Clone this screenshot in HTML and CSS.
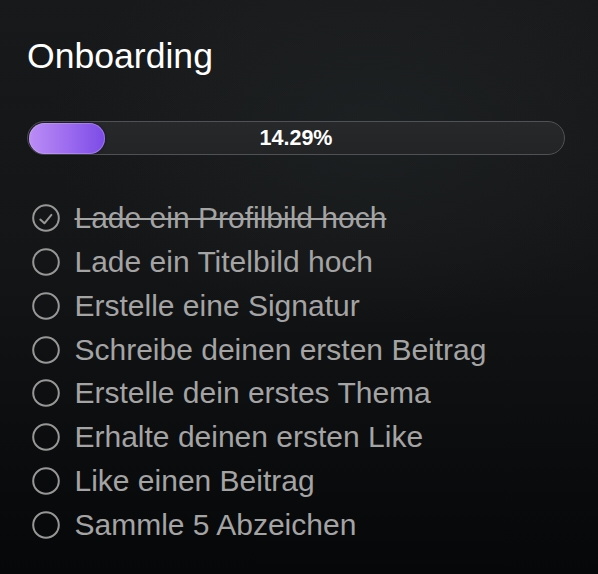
FILE: index.html
```html
<!DOCTYPE html>
<html lang="de">
<head>
<meta charset="utf-8">
<title>Onboarding</title>
<link rel="stylesheet" href="styles.css">
</head>
<body>
<main class="panel">
  <h1 class="title">Onboarding</h1>
  <div class="progress">
    <div class="progress-track">
      <div class="progress-fill" style="width: 14.29%"></div>
    </div>
    <span class="progress-label">14.29%</span>
  </div>
  <ul class="tasks">
    <li class="task done">
      <svg class="icon" viewBox="0 0 28 28" aria-hidden="true"><circle cx="14" cy="14" r="12.8"/><path d="M8.3 15.6 L12.4 19.3 L19.4 10.9"/></svg>
      <span class="task-text">Lade ein Profilbild hoch</span>
    </li>
    <li class="task">
      <svg class="icon" viewBox="0 0 28 28" aria-hidden="true"><circle cx="14" cy="14" r="12.8"/></svg>
      <span class="task-text">Lade ein Titelbild hoch</span>
    </li>
    <li class="task">
      <svg class="icon" viewBox="0 0 28 28" aria-hidden="true"><circle cx="14" cy="14" r="12.8"/></svg>
      <span class="task-text">Erstelle eine Signatur</span>
    </li>
    <li class="task">
      <svg class="icon" viewBox="0 0 28 28" aria-hidden="true"><circle cx="14" cy="14" r="12.8"/></svg>
      <span class="task-text">Schreibe deinen ersten Beitrag</span>
    </li>
    <li class="task">
      <svg class="icon" viewBox="0 0 28 28" aria-hidden="true"><circle cx="14" cy="14" r="12.8"/></svg>
      <span class="task-text">Erstelle dein erstes Thema</span>
    </li>
    <li class="task">
      <svg class="icon" viewBox="0 0 28 28" aria-hidden="true"><circle cx="14" cy="14" r="12.8"/></svg>
      <span class="task-text">Erhalte deinen ersten Like</span>
    </li>
    <li class="task">
      <svg class="icon" viewBox="0 0 28 28" aria-hidden="true"><circle cx="14" cy="14" r="12.8"/></svg>
      <span class="task-text">Like einen Beitrag</span>
    </li>
    <li class="task">
      <svg class="icon" viewBox="0 0 28 28" aria-hidden="true"><circle cx="14" cy="14" r="12.8"/></svg>
      <span class="task-text">Sammle 5 Abzeichen</span>
    </li>
  </ul>
</main>
</body>
</html>
```

FILE: styles.css
```css
html, body {
  margin: 0;
  padding: 0;
  height: 100%;
}

body {
  font-family: "Liberation Sans", Arial, Helvetica, sans-serif;
  background:
    radial-gradient(ellipse 320px 200px at 62% 22%, rgba(42, 50, 50, 0.35), rgba(42, 50, 50, 0) 100%),
    linear-gradient(180deg, #18191b 0%, #141517 45%, #0b0c0e 80%, #060709 100%);
  color: #a4a4a4;
  overflow: hidden;
}

.panel {
  padding: 36px 33px 0 27px;
}

.title {
  margin: 0;
  font-size: 35.6px;
  line-height: 40px;
  font-weight: 400;
  color: #ffffff;
}

.progress {
  display: grid;
  margin-top: 45px;
  height: 34px;
}

.progress-track,
.progress-label {
  grid-area: 1 / 1;
}

.progress-track {
  box-sizing: border-box;
  height: 34px;
  border: 1.5px solid #505154;
  border-radius: 17px;
  background: linear-gradient(180deg, #27282a, #232426);
  padding: 0.5px;
  display: flex;
}

.progress-fill {
  height: 100%;
  border-radius: 16px;
  background: linear-gradient(90deg, #bb8df5 0%, #9d6cf0 50%, #7c4be6 100%);
  box-shadow: inset 0 0 0 1px rgba(215, 190, 255, 0.35), 0 0 3px rgba(0, 0, 0, 0.6);
}

.progress-label {
  align-self: center;
  justify-self: center;
  font-size: 21.5px;
  font-weight: 700;
  line-height: 24px;
  color: #ffffff;
}

.tasks {
  list-style: none;
  margin: 41px 0 0;
  padding: 0;
}

.task {
  display: flex;
  align-items: center;
  gap: 15px;
  height: 43.86px;
  font-size: 30px;
  line-height: 43.86px;
  white-space: nowrap;
}

.icon {
  flex: none;
  width: 28px;
  height: 28px;
  margin-left: 4.5px;
  fill: none;
  stroke: #979797;
  stroke-width: 2;
  stroke-linecap: round;
  stroke-linejoin: round;
}

.task.done .task-text {
  text-decoration: line-through;
  text-decoration-thickness: 2px;
}
```
